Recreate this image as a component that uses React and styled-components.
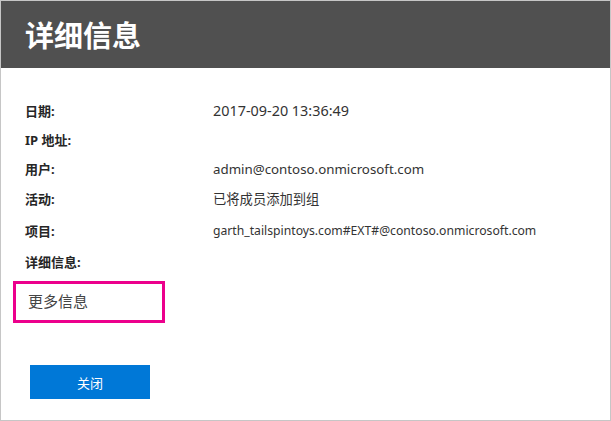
import React from 'react';
import styled, { createGlobalStyle } from 'styled-components';

const GlobalStyle = createGlobalStyle`
  html, body {
    margin: 0;
    padding: 0;
    background: #ffffff;
  }
  body {
    font-family: "Segoe UI", "Noto Sans", "Noto Sans CJK SC", sans-serif;
    color: #333333;
  }
`;

const Dialog = styled.div`
  width: 611px;
  height: 421px;
  box-sizing: border-box;
  border: 1px solid #c6c6c6;
  display: flex;
  flex-direction: column;
  background: #ffffff;
`;

const Header = styled.div`
  height: 67px;
  background: #505050;
  display: flex;
  align-items: center;
  padding: 0 0 2px 24px;
  box-sizing: border-box;
`;

const Title = styled.h1`
  margin: 0;
  font-family: "Noto Sans CJK SC", sans-serif;
  font-size: 29px;
  font-weight: 700;
  color: #ffffff;
`;

const Body = styled.div`
  padding: 27px 0 0 24px;
  display: flex;
  flex-direction: column;
`;

const Row = styled.div`
  display: flex;
  align-items: center;
  height: ${(p) => p.h}px;
`;

const Label = styled.div`
  width: 188px;
  font-family: "Noto Sans", "Noto Sans CJK SC", sans-serif;
  font-size: 13px;
  font-weight: 700;
  color: #262626;
`;

const Value = styled.div`
  font-family: "Noto Sans", "Noto Sans CJK SC", sans-serif;
  font-size: ${(p) => p.size || 13}px;
  color: #333333;
`;

const MoreBox = styled.div`
  margin: 5px 0 0 -12px;
  width: 152px;
  height: 42px;
  box-sizing: border-box;
  border: 3px solid #ec008c;
  display: flex;
  align-items: center;
  padding: 0 0 3px 12px;
  font-family: "Noto Sans CJK SC", sans-serif;
  font-size: 15px;
  color: #444444;
`;

const Footer = styled.div`
  padding: 42px 0 0 29px;
`;

const Button = styled.button`
  width: 120px;
  height: 34px;
  border: none;
  background: #0078d7;
  color: #ffffff;
  font-family: "Noto Sans CJK SC", sans-serif;
  font-size: 13px;
  padding: 0;
  cursor: pointer;
`;

const rows = [
  { label: '日期:', value: '2017-09-20 13:36:49', size: 14.4, h: 30 },
  { label: 'IP 地址:', value: '', h: 29 },
  { label: '用户:', value: 'admin@contoso.onmicrosoft.com', size: 13.3, h: 29 },
  { label: '活动:', value: '已将成员添加到组', size: 13.3, h: 31 },
  { label: '项目:', value: 'garth_tailspintoys.com#EXT#@contoso.onmicrosoft.com', size: 12.2, h: 32 },
  { label: '详细信息:', value: '', h: 30 },
];

const App = () => {
  return (
    <>
      <GlobalStyle />
      <Dialog>
        <Header>
          <Title>详细信息</Title>
        </Header>
        <Body>
          {rows.map((r) => (
            <Row key={r.label} h={r.h}>
              <Label>{r.label}</Label>
              <Value size={r.size}>{r.value}</Value>
            </Row>
          ))}
          <MoreBox>更多信息</MoreBox>
        </Body>
        <Footer>
          <Button>关闭</Button>
        </Footer>
      </Dialog>
    </>
  );
};

export default App;
